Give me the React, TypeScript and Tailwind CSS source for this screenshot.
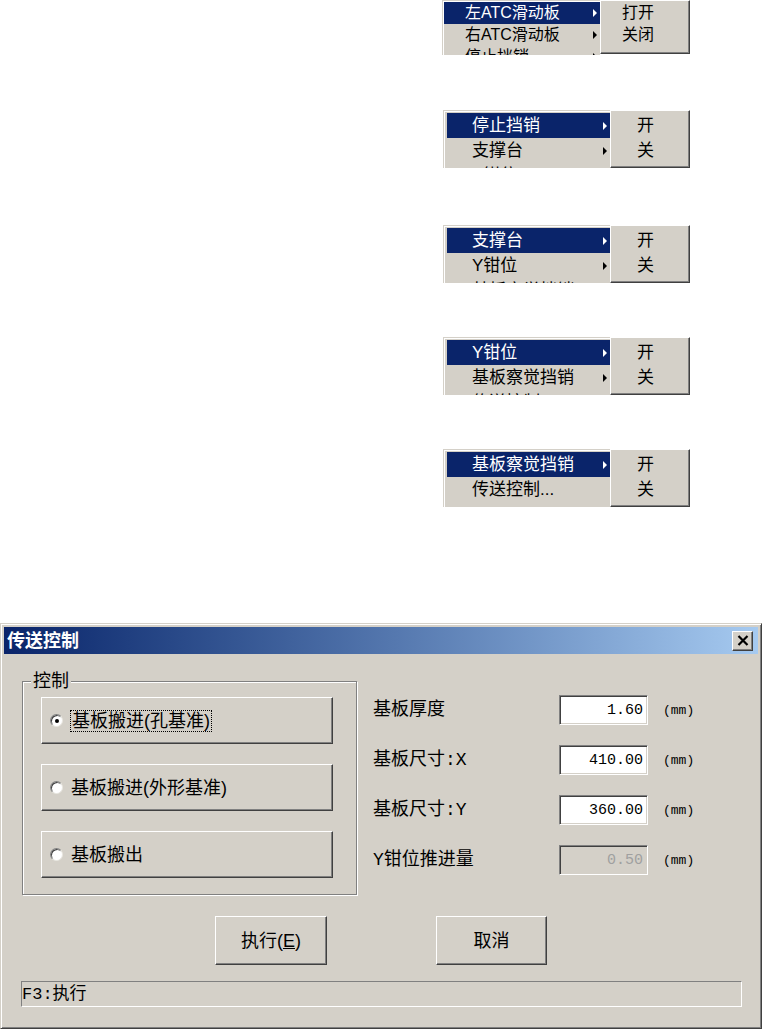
const cjk = "font-['Liberation_Sans','Noto_Sans_CJK_SC',sans-serif]";
const mono = "font-['Liberation_Mono','Noto_Sans_CJK_SC',monospace]";

const raised =
  "border border-t-white border-l-white border-r-[#404040] border-b-[#404040] shadow-[inset_-1px_-1px_0_#808080]";
const sunken =
  "border border-t-[#808080] border-l-[#808080] border-r-white border-b-white shadow-[inset_1px_1px_0_#404040,inset_-1px_-1px_0_#d4d0c8]";

type MenuProps = {
  items: string[];
  sub: string[];
  small?: boolean;
  className?: string;
};

const Arrow = ({ white }: { white: boolean }) => (
  <div
    className={`w-0 h-0 border-y-[4px] border-y-transparent border-l-[4px] ${
      white ? "border-l-white" : "border-l-black"
    }`}
  />
);

const Menu: React.FC<MenuProps> = ({ items, sub, small, className }) => {
  return (
    <div className={`flex items-start ${className ?? ""}`}>
      {/* main menu */}
      <div
        className={`${
          small
            ? "w-[158px] h-[55px] pt-[1px] pl-[1px] text-[16px]"
            : "w-[167px] h-[58px] pt-[2px] pl-[3px] text-[17px]"
        } bg-[#d4d0c8] border-l border-t border-[#d4d0c8] shadow-[inset_1px_1px_0_#fff] overflow-hidden ${cjk}`}
      >
        {items.map((item, index) => (
          <div
            key={index}
            className={`flex items-center leading-none ${
              small ? "h-[22px] pl-[21px] pr-[3px]" : "h-[25px] pl-[25px] pr-[3px]"
            } ${index === 0 ? "bg-[#0a246a] text-white" : "text-black"}`}
          >
            <span>{item}</span>
            {!item.endsWith("...") && (
              <div className="ml-auto">
                <Arrow white={index === 0} />
              </div>
            )}
          </div>
        ))}
      </div>
      {/* sub menu */}
      <div
        className={`${
          small
            ? "w-[90px] h-[54px] pt-[1px] pl-[21px] text-[16px]"
            : "w-[80px] h-[58px] pt-[2px] pl-[26px] text-[17px]"
        } bg-[#d4d0c8] ${raised} ${cjk}`}
      >
        {sub.map((s, index) => (
          <div
            key={index}
            className={`flex items-center leading-none text-black ${
              small ? "h-[22px]" : "h-[25px]"
            }`}
          >
            {s}
          </div>
        ))}
      </div>
    </div>
  );
};

const Radio = ({ checked }: { checked?: boolean }) => (
  <div className="w-[13px] h-[13px] rounded-full bg-white border border-t-[#808080] border-l-[#808080] border-r-[#e8e6e0] border-b-[#e8e6e0] shadow-[inset_1px_1px_0_#404040] flex items-center justify-center shrink-0">
    {checked && <div className="w-[4px] h-[4px] rounded-full bg-black" />}
  </div>
);

const Field = ({
  label,
  value,
  disabled,
}: {
  label: string;
  value: string;
  disabled?: boolean;
}) => (
  <div className="flex items-center h-[30px]">
    <div className={`w-[186px] text-[18px] leading-none text-black ${mono}`}>{label}</div>
    <div
      className={`w-[89px] h-[30px] flex items-center justify-end pr-[4px] text-[15px] leading-none ${mono} ${sunken} ${
        disabled ? "bg-[#d4d0c8] text-[#a0a0a0]" : "bg-white text-black"
      }`}
    >
      {value}
    </div>
    <div className={`ml-[15px] text-[13px] leading-none text-black ${mono}`}>(mm)</div>
  </div>
);

const App: React.FC = () => {
  return (
    <div className="w-[762px] h-[1029px] bg-white overflow-hidden flex flex-col">
      {/* menus */}
      <div className="flex flex-col">
        <Menu
          className="ml-[442px]"
          small
          items={["左ATC滑动板", "右ATC滑动板", "停止挡销"]}
          sub={["打开", "关闭"]}
        />
        <Menu
          className="ml-[443px] mt-[55px]"
          items={["停止挡销", "支撑台", "Y钳位"]}
          sub={["开", "关"]}
        />
        <Menu
          className="ml-[443px] mt-[57px]"
          items={["支撑台", "Y钳位", "基板察觉挡销"]}
          sub={["开", "关"]}
        />
        <Menu
          className="ml-[443px] mt-[54px]"
          items={["Y钳位", "基板察觉挡销", "传送控制..."]}
          sub={["开", "关"]}
        />
        <Menu
          className="ml-[443px] mt-[54px]"
          items={["基板察觉挡销", "传送控制..."]}
          sub={["开", "关"]}
        />
      </div>

      {/* dialog */}
      <div
        className={`mt-[116px] w-[762px] h-[406px] shrink-0 p-[3px] bg-[#d4d0c8] border border-t-[#d4d0c8] border-l-[#d4d0c8] border-r-[#404040] border-b-[#404040] shadow-[inset_1px_1px_0_#fff,inset_-1px_-1px_0_#808080] flex flex-col ${cjk}`}
      >
        {/* title bar */}
        <div className="h-[27px] flex items-center bg-linear-to-r from-[#0a246a] to-[#a6caf0]">
          <div className="pl-[3px] text-white font-bold text-[18px] leading-none">
            传送控制
          </div>
          <div
            className={`ml-auto mr-[5px] w-[21px] h-[20px] bg-[#d4d0c8] ${raised} flex items-center justify-center`}
          >
            <svg width="12" height="11" viewBox="0 0 12 11">
              <path d="M1.5 1L10.5 10M10.5 1L1.5 10" stroke="black" strokeWidth="2.2" />
            </svg>
          </div>
        </div>

        {/* body */}
        <div className="flex items-start">
          <fieldset className="mt-[18px] ml-[18px] w-[335px] border border-[#808080] shadow-[inset_1px_1px_0_#fff,1px_1px_0_#fff] pl-[8px] pt-[7px] pb-[16px]">
            <legend className="px-[2px] h-[18px] text-[18px] leading-[18px] text-black bg-[#d4d0c8]">
              控制
            </legend>
            <div className="ml-[10px] flex flex-col gap-[20px]">
              <div className={`w-[292px] h-[47px] flex items-center pl-[8px] ${raised}`}>
                <Radio checked />
                <span className="ml-[7px] border border-dotted border-black px-px text-[18px] leading-[20px] text-black">
                  基板搬进(孔基准)
                </span>
              </div>
              <div className={`w-[292px] h-[47px] flex items-center pl-[8px] ${raised}`}>
                <Radio />
                <span className="ml-[8px] text-[18px] leading-none text-black">
                  基板搬进(外形基准)
                </span>
              </div>
              <div className={`w-[292px] h-[47px] flex items-center pl-[8px] ${raised}`}>
                <Radio />
                <span className="ml-[8px] text-[18px] leading-none text-black">基板搬出</span>
              </div>
            </div>
          </fieldset>

          <div className="ml-[16px] mt-[41px] flex flex-col gap-[20px]">
            <Field label="基板厚度" value="1.60" />
            <Field label="基板尺寸:X" value="410.00" />
            <Field label="基板尺寸:Y" value="360.00" />
            <Field label="Y钳位推进量" value="0.50" disabled />
          </div>
        </div>

        {/* buttons */}
        <div className="mt-[21px] flex">
          <div
            className={`ml-[211px] w-[112px] h-[49px] flex items-center justify-center text-[18px] leading-none text-black ${raised}`}
          >
            执行(<span className="underline">E</span>)
          </div>
          <div
            className={`ml-[109px] w-[111px] h-[49px] flex items-center justify-center text-[18px] leading-none text-black ${raised}`}
          >
            取消
          </div>
        </div>

        {/* status */}
        <div
          className={`mt-[16px] ml-[17px] w-[721px] h-[26px] flex items-center border border-t-[#808080] border-l-[#808080] border-r-white border-b-white text-[17px] leading-none text-black ${mono}`}
        >
          F3:执行
        </div>
      </div>
    </div>
  );
};

export default App;
